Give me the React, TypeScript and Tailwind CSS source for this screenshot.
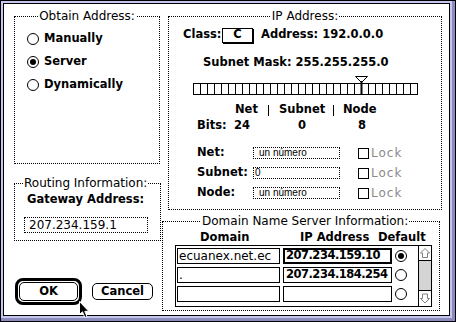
import React from "react";

function Radio({ on = false }: { on?: boolean }) {
  return (
    <div className="w-[12px] h-[12px] rounded-full border border-black bg-white flex items-center justify-center shrink-0">
      {on && <div className="w-[6px] h-[6px] rounded-full bg-black" />}
    </div>
  );
}

function Group({
  title,
  className,
  titleClass,
  children,
}: {
  title: string;
  className: string;
  titleClass: string;
  children: React.ReactNode;
}) {
  return (
    <div className={"relative border border-dotted border-black shrink-0 " + className}>
      <div className={"absolute -top-[8px] bg-white px-[1px] leading-[14px] text-[12px] whitespace-nowrap " + titleClass}>
        {title}
      </div>
      {children}
    </div>
  );
}

function FieldRow({ label, value, tight }: { label: string; value: string; tight?: boolean }) {
  return (
    <div className="flex items-center h-[16px] pl-[28px]">
      <span className="w-[56px] font-bold text-[11.5px]">{label}</span>
      <div
        className={
          "w-[87px] h-[12px] border border-dotted border-black flex items-center font-['Liberation_Sans',sans-serif] text-[10px] leading-[10px] " +
          (tight ? "pl-[1px]" : "pl-[5px]")
        }
      >
        {value}
      </div>
      <div className="ml-[18px] w-[11px] h-[11px] border border-black" />
      <span className="ml-[2px] text-[12px] text-[#8a8a8a] tracking-[1px]">Lock</span>
    </div>
  );
}

function ArrowUp() {
  return (
    <svg width="12" height="14" viewBox="0 0 12 14">
      <path d="M6 2.5 L10.5 7 L8.5 7 L8.5 11.5 L3.5 11.5 L3.5 7 L1.5 7 Z" fill="none" stroke="#808080" strokeWidth="1" />
    </svg>
  );
}

function ArrowDown() {
  return (
    <svg width="12" height="15" viewBox="0 0 12 15">
      <path d="M6 12 L10.5 7.5 L8.5 7.5 L8.5 3 L3.5 3 L3.5 7.5 L1.5 7.5 Z" fill="none" stroke="#808080" strokeWidth="1" />
    </svg>
  );
}

export default function App() {
  const cells = Array.from({ length: 32 }, (_, i) => i);
  const rows = [
    { d: "ecuanex.net.ec", ip: "207.234.159.10", on: true, focus: true },
    { d: ".", ip: "207.234.184.254", on: false, focus: false },
    { d: "", ip: "", on: false, focus: false },
  ];
  return (
    <div className="w-[456px] h-[322px] border border-black bg-[#c6c6ee] pt-[2px] pl-[2px] pr-[5px] pb-[5px] shadow-[inset_-3px_-3px_0_#8c8cbc] font-['DejaVu_Sans',sans-serif] text-black">
      <div className="relative w-full h-full border border-black bg-white flex pl-[10px] pt-[12px]">
        {/* Left column */}
        <div className="flex flex-col w-[147px] shrink-0">
          <Group title="Obtain Address:" className="w-[146px] h-[148px]" titleClass="left-1/2 -translate-x-1/2">
            <div className="flex flex-col pt-[14px] pl-[12px] gap-[7px]">
              {[
                ["Manually", false],
                ["Server", true],
                ["Dynamically", false],
              ].map(([t, on]) => (
                <div key={t as string} className="flex items-center h-[16px]">
                  <Radio on={on as boolean} />
                  <span className="ml-[5px] font-bold text-[11.5px]">{t as string}</span>
                </div>
              ))}
            </div>
          </Group>
          <Group title="Routing Information:" className="mt-[19px] w-[147px] h-[58px]" titleClass="left-[8px]">
            <div className="flex flex-col pt-[8px]">
              <div className="h-[16px] flex items-center pl-[12px] font-bold text-[11.5px]">Gateway Address:</div>
              <div className="mt-[9px] ml-[9px] w-[124px] h-[16px] border border-dotted border-black flex items-center pl-[4px] text-[12px]">
                207.234.159.1
              </div>
            </div>
          </Group>
          <div className="mt-[37px] flex items-center">
            <div className="ml-[1px] w-[67px] h-[27px] border-[3px] border-black rounded-[8px] p-[1px]">
              <div className="w-full h-full border border-black rounded-[5px] flex items-center justify-center font-bold text-[11.5px]">
                OK
              </div>
            </div>
            <div className="ml-[10px] w-[61px] h-[17px] border border-black rounded-[5px] flex items-center justify-center font-bold text-[11.5px]">
              Cancel
            </div>
          </div>
        </div>

        {/* Right column */}
        <div className="flex flex-col ml-[1px]">
          <Group title="IP Address:" className="ml-[6px] w-[274px] h-[194px]" titleClass="left-1/2 -translate-x-1/2">
            <div className="flex flex-col pt-[10px] font-bold text-[11.5px]">
              <div className="flex items-center h-[16px] pl-[14px]">
                <span className="w-[39px]">Class:</span>
                <div className="w-[31px] h-[15px] border border-black shadow-[1px_1px_0_#000] flex items-center justify-center">C</div>
                <span className="ml-[8px]">Address: 192.0.0.0</span>
              </div>
              <div className="mt-[12px] flex items-center h-[16px] pl-[34px]">Subnet Mask: 255.255.255.0</div>
              <div className="mt-[12px] ml-[24px] relative w-[225px] h-[12px] flex border-t border-b border-r border-black">
                {cells.map((i) => (
                  <div key={i} className="w-[7px] h-full border-l border-black shrink-0" />
                ))}
                <svg className="absolute left-[162px] -top-[8px]" width="13" height="20" viewBox="0 0 13 20">
                  <path d="M0.5 0.5 H12.5 L7 6 L6 6 Z" fill="white" stroke="black" strokeWidth="1" />
                  <rect x="5" y="5" width="3" height="1" fill="black" />
                  <rect x="5.5" y="5" width="2" height="14" fill="black" />
                </svg>
              </div>
              <div className="mt-[7px] flex items-center h-[16px] pl-[66px]">
                <span className="w-[33px]">Net</span>
                <span className="w-[11px] flex items-center">
                  <span className="w-[1px] h-[11px] bg-black" />
                </span>
                <span className="w-[54px]">Subnet</span>
                <span className="w-[10px] flex items-center">
                  <span className="w-[1px] h-[11px] bg-black" />
                </span>
                <span>Node</span>
              </div>
              <div className="flex items-center h-[16px] pl-[28px]">
                <span className="w-[37px]">Bits:</span>
                <span className="w-[64px]">24</span>
                <span className="w-[60px]">0</span>
                <span>8</span>
              </div>
              <div className="mt-[11px] flex flex-col gap-[4px] font-normal">
                <FieldRow label="Net:" value="un número" />
                <FieldRow label="Subnet:" value="0" tight />
                <FieldRow label="Node:" value="un número" />
              </div>
            </div>
          </Group>

          <Group title="Domain Name Server Information:" className="mt-[11px] w-[278px] h-[90px]" titleClass="left-[38px]">
            <div className="flex flex-col pt-[9px]">
              <div className="flex items-center h-[14px] pl-[37px] font-bold text-[11.5px]">
                <span className="w-[100px]">Domain</span>
                <span className="w-[78px]">IP Address</span>
                <span>Default</span>
              </div>
              <div className="ml-[12px] w-[257px] h-[62px] border border-black flex">
                <div className="w-[242px] flex flex-col pl-[1px] pt-[2px] gap-[3px]">
                  {rows.map((r, i) => (
                    <div key={i} className="flex items-center h-[16px]">
                      <div className="w-[103px] h-[16px] border border-black flex items-center pl-[1px] text-[12px] whitespace-nowrap overflow-hidden">
                        {r.d}
                      </div>
                      <div
                        className={
                          "ml-[3px] w-[109px] h-[16px] border-black flex items-center font-bold text-[11.5px] tracking-[-0.5px] whitespace-nowrap overflow-hidden " +
                          (r.focus ? "border-2 pl-[1px]" : "border pl-[2px]")
                        }
                      >
                        {r.ip}
                      </div>
                      <div className="ml-[3px]">
                        <Radio on={r.on} />
                      </div>
                    </div>
                  ))}
                </div>
                <div className="ml-auto w-[13px] h-full border-l border-black flex flex-col bg-[#d4d4d4]">
                  <div className="h-[15px] bg-white border-b border-black flex items-center justify-center">
                    <ArrowUp />
                  </div>
                  <div className="flex-1" />
                  <div className="h-[16px] bg-white border-t border-black flex items-center justify-center">
                    <ArrowDown />
                  </div>
                </div>
              </div>
            </div>
          </Group>
        </div>

        {/* Mouse cursor */}
        <svg className="absolute left-[75px] top-[297px]" width="12" height="18" viewBox="0 0 12 18">
          <path d="M0.5 0.5 L0.5 13.5 L3.5 10.8 L5.8 16.5 L8 15.6 L5.8 10.3 L9.8 10.3 Z" fill="black" stroke="white" strokeWidth="1" />
        </svg>
      </div>
    </div>
  );
}
